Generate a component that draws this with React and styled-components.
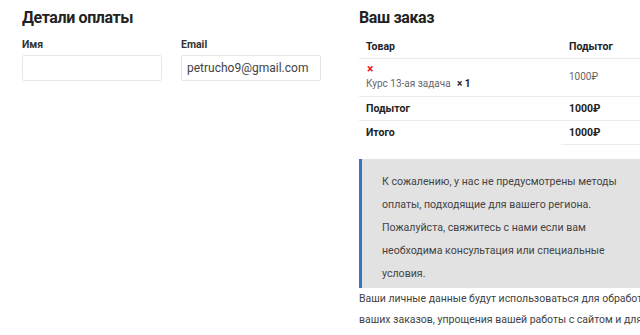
import React from 'react'
import styled, { createGlobalStyle } from 'styled-components'

const GlobalStyle = createGlobalStyle`
    html, body {
        margin: 0;
        padding: 0;
        background: #fff;
        overflow: hidden;
        font-family: Roboto, "Liberation Sans", sans-serif;
        color: #444;
    }
`

const Page = styled.div`
    display: flex;
    align-items: flex-start;
    gap: 38px;
    padding: 7px 0 0 22px;
    width: 700px;
`

const Column = styled.div`
    flex: 0 0 ${props => props.width}px;
    display: flex;
    flex-direction: column;
`

const Heading = styled.h3`
    margin: 0;
    font-size: 17px;
    line-height: 20px;
    font-weight: 700;
    letter-spacing: -0.4px;
    color: #222;
    transform: scaleX(0.94);
    transform-origin: left center;
`

const Fields = styled.div`
    display: flex;
    gap: 19px;
    margin-top: 11px;
`

const Field = styled.div`
    display: flex;
    flex-direction: column;
    width: 140px;
`

const Label = styled.label`
    font-size: 10.5px;
    font-weight: 700;
    color: #333;
    line-height: 14px;
    margin-bottom: 3px;
`

const Input = styled.input`
    box-sizing: border-box;
    width: 140px;
    height: 26px;
    border: 1px solid #e3e6ea;
    border-radius: 2px;
    padding: 0 5px;
    font-family: Roboto, "Liberation Sans", sans-serif;
    font-size: 12px;
    color: #444;
    outline: none;
`

const Table = styled.table`
    border-collapse: collapse;
    width: 100%;
    margin-top: 8px;
    table-layout: fixed;
`

const Cell = styled.td`
    padding: ${props => props.pad || '5px 8px 4px 7px'};
    text-align: left;
    vertical-align: middle;
    font-size: ${props => (props.bold ? '10.5px' : '10px')};
    line-height: 14px;
    font-weight: ${props => (props.bold ? 700 : 400)};
    color: ${props => (props.bold ? '#222' : '#666')};
    border-bottom: ${props => (props.noline ? 'none' : '1px solid #e9ebee')};
`

const Remove = styled.span`
    display: block;
    color: #e8141c;
    font-weight: 700;
    font-size: 12px;
    line-height: 12px;
    margin: 0 0 2px 1px;
`

const Qty = styled.strong`
    color: #222;
    margin-left: 4px;
`

const Notice = styled.div`
    margin-top: 14px;
    background: #e2e2e2;
    border-left: 3px solid #3574c6;
    padding: 11px 47px 3px 20px;
    font-size: 10.6px;
    line-height: 23px;
    color: #444;
`

const Privacy = styled.p`
    margin: 0;
    font-size: 10.5px;
    line-height: 21px;
    color: #3f3f3f;
`

export default function App() {
    return (
        <>
            <GlobalStyle />
            <Page>
                <Column width={299}>
                    <Heading>Детали оплаты</Heading>
                    <Fields>
                        <Field>
                            <Label>Имя</Label>
                            <Input type="text" />
                        </Field>
                        <Field>
                            <Label>Email</Label>
                            <Input type="email" defaultValue="petrucho9@gmail.com" />
                        </Field>
                    </Fields>
                </Column>
                <Column width={310}>
                    <Heading>Ваш заказ</Heading>
                    <Table>
                        <colgroup>
                            <col style={{ width: '202px' }} />
                            <col />
                        </colgroup>
                        <tbody>
                            <tr>
                                <Cell as="th" bold pad="5px 8px 4px 7px">Товар</Cell>
                                <Cell as="th" bold pad="5px 8px 4px 8px">Подытог</Cell>
                            </tr>
                            <tr>
                                <Cell pad="4px 8px 5px 7px">
                                    <Remove>×</Remove>
                                    Курс 13-ая задача <Qty>× 1</Qty>
                                </Cell>
                                <Cell pad="4px 8px 5px 8px">1000₽</Cell>
                            </tr>
                            <tr>
                                <Cell as="th" bold>Подытог</Cell>
                                <Cell bold pad="5px 8px 4px 8px">1000₽</Cell>
                            </tr>
                            <tr>
                                <Cell as="th" bold noline>Итого</Cell>
                                <Cell bold pad="5px 8px 4px 8px">1000₽</Cell>
                            </tr>
                        </tbody>
                    </Table>
                    <Notice>
                        К сожалению, у нас не предусмотрены методы оплаты, подходящие для вашего региона.
                        Пожалуйста, свяжитесь с нами если вам необходима консультация или специальные условия.
                    </Notice>
                    <Privacy>
                        Ваши личные данные будут использоваться для обработки ваших заказов, упрощения вашей работы
                        с сайтом и для других целей, описанных в нашей политика конфиденциальности.
                    </Privacy>
                </Column>
            </Page>
        </>
    )
}
